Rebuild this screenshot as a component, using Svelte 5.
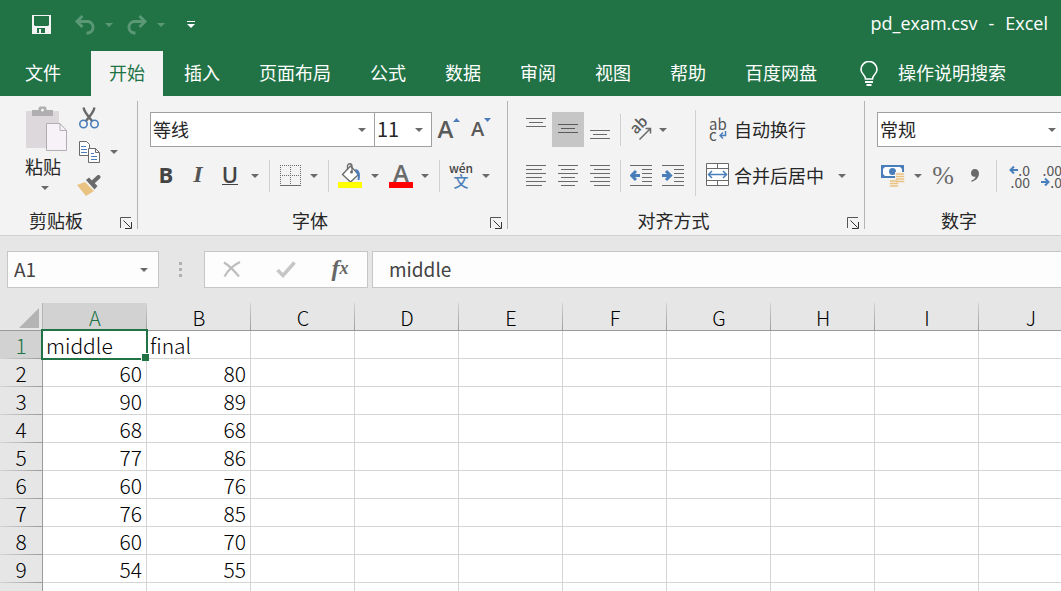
<script lang="ts">
	const tabs = ['文件', '开始', '插入', '页面布局', '公式', '数据', '审阅', '视图', '帮助', '百度网盘'];
	const columns = 'ABCDEFGHIJKLMNOPQRST'.split('');
	const data: (string | number)[][] = [
		['middle', 'final'],
		[60, 80],
		[90, 89],
		[68, 68],
		[77, 86],
		[60, 76],
		[76, 85],
		[60, 70],
		[54, 55]
	];
	const rowCount = 30;

	let activeTab = $state('开始');
	let selected = $state({ row: 0, col: 0 });
	let valign = $state('middle');

	let address = $derived(columns[selected.col] + (selected.row + 1));
	let content = $derived(cellValue(selected.row, selected.col));

	function cellValue(row: number, col: number) {
		return data[row]?.[col] ?? '';
	}
</script>

{#snippet caret()}
	<svg class="caret" width="8" height="4" viewBox="0 0 8 4"><path d="M0 0h8L4 4z" fill="currentColor" /></svg>
{/snippet}

{#snippet drop(label: string)}
	<button class="drop" aria-label={label}>{@render caret()}</button>
{/snippet}

{#snippet footer(name: string)}
	<div class="group-footer">
		<span class="group-name">{name}</span>
		<button class="launcher" aria-label="{name}设置">
			<svg width="12" height="12" viewBox="0 0 12 12" fill="none" stroke="#555">
				<path d="M.5 11V.5H11" />
				<path d="M3.5 3.5l7 7M11.5 5v6.5H5" stroke="#333" />
			</svg>
		</button>
	</div>
{/snippet}

<div class="excel">
	<header class="title-bar">
		<div class="quick">
			<button class="tool" aria-label="保存">
				<svg width="19" height="19" viewBox="0 0 19 19">
					<path d="M0 0h19v19H0zM2 1v9l1 1h13l1-1V1zM5 13v5h2v-4h2v4h4v-5z" fill="#f3f3f3" fill-rule="evenodd" />
				</svg>
			</button>
			<button class="tool undo" aria-label="撤消">
				<svg width="22" height="20" viewBox="0 0 22 20" fill="none" stroke="currentColor" stroke-width="3">
					<path d="M3 6.500h11a5.800 5.800 0 0 1 0 11.500h-1.500" />
					<path d="M8.500 1L3 6.500 8.500 12" />
				</svg>
			</button>
			<button class="drop faded" aria-label="撤消列表">{@render caret()}</button>
			<button class="tool redo" aria-label="恢复">
				<svg width="22" height="20" viewBox="0 0 22 20" fill="none" stroke="currentColor" stroke-width="3">
					<path d="M19 6.500H8A5.800 5.800 0 0 0 8 18h1.500" />
					<path d="M13.500 1L19 6.500 13.500 12" />
				</svg>
			</button>
			<button class="drop faded" aria-label="恢复列表">{@render caret()}</button>
			<button class="drop customize" aria-label="自定义快速访问工具栏">
				<svg width="8" height="7" viewBox="0 0 8 7" fill="#fff"><path d="M0 0h8v1H0zM0 3h8L4 7z" /></svg>
			</button>
		</div>
		<div class="doc-title"><span>pd_exam.csv</span><span>-</span><span>Excel</span></div>
	</header>

	<nav class="tabs">
		{#each tabs as tab}
			<button class="tab" class:active={tab === activeTab} onclick={() => (activeTab = tab)}>{tab}</button>
		{/each}
		<button class="tell-me">
			<svg width="18" height="26" viewBox="0 0 18 26" fill="none" stroke="#fff" stroke-width="1.600">
				<path d="M5.500 18c0-4-4.500-5-4.500-9.500a8 8 0 0 1 16 0c0 4.500-4.500 5.500-4.500 9.500z" />
				<path d="M5 21h8M6.500 24h5" stroke-width="2" />
			</svg>
			<span>操作说明搜索</span>
		</button>
	</nav>

	<section class="ribbon">
		<div class="group">
			<div class="clipboard">
				<button class="paste">
					<svg width="50" height="48" viewBox="0 0 50 48">
						<rect x="8" y="5" width="33" height="37" rx="1" fill="#dcd8dc" />
						<path d="M14 4h6.500V2.500a2 2 0 0 1 2-2h4a2 2 0 0 1 2 2V4H35v6H14z" fill="#b0aeb0" />
						<circle cx="24.500" cy="4" r="1.500" fill="#f3f3f3" />
						<path d="M28.500 17.500H42l6.500 7v20h-20z" fill="#f7f2f8" stroke="#b0aeb0" />
						<path d="M42 17.500v7h6.500" fill="none" stroke="#b0aeb0" />
					</svg>
					<span>粘贴</span>
					{@render caret()}
				</button>
				<div class="clip-tools">
					<button class="tool" aria-label="剪切">
						<svg width="20" height="22" viewBox="0 0 20 22" fill="none">
							<path d="M4.500 0.500c.5 3 2 6 9 14M15.500 0.500c-.5 3-2 6-9 14" stroke="#6a6a6a" stroke-width="2.400" />
							<circle cx="4.500" cy="17" r="3.700" stroke="#4a7ebb" stroke-width="1.600" />
							<circle cx="15.500" cy="17" r="3.700" stroke="#4a7ebb" stroke-width="1.600" />
						</svg>
					</button>
					<div class="row">
						<button class="tool" aria-label="复制">
							<svg width="21" height="22" viewBox="0 0 21 22" fill="#fff" stroke="#6a6a6a">
								<path d="M.5.5h7l3 3v11H.5z" />
								<path d="M2 5.500h5M2 8.500h6M2 11.500h6" stroke="#4a7ebb" />
								<path d="M9.500 7.500h7l4 4v10h-11zM16.500 7.500v4h4" />
								<path d="M12 12.500h3M12 15.500h6M12 18.500h6" stroke="#4a7ebb" />
							</svg>
						</button>
						<button class="drop copy-drop" aria-label="复制选项">{@render caret()}</button>
					</div>
					<button class="tool" aria-label="格式刷">
						<svg width="24" height="22" viewBox="0 0 24 22">
							<path d="M0 10l8-3 9 9-8 5z" fill="#eac282" />
							<path d="M9 5l3-2.500 8.500 8.500-3 3.500z" fill="#6a6a6a" />
							<path d="M15 8l6.500-6" stroke="#6a6a6a" stroke-width="4" stroke-linecap="round" />
						</svg>
					</button>
				</div>
			</div>
			{@render footer('剪贴板')}
		</div>

		<div class="group">
			<div class="group-body font-body">
				<div class="row">
					<div class="combo font-name">
						<select aria-label="字体"><option>等线</option><option>宋体</option></select>
						{@render caret()}
					</div>
					<div class="combo font-size">
						<select aria-label="字号"><option>11</option><option>12</option></select>
						{@render caret()}
					</div>
					<button class="tool grow" aria-label="增大字号">
						<span>A</span>
						<svg width="7" height="4" viewBox="0 0 7 4"><path d="M0 4h7L3.500 0z" fill="#4a7ebb" /></svg>
					</button>
					<button class="tool shrink" aria-label="减小字号">
						<span>A</span>
						<svg width="7" height="4" viewBox="0 0 7 4"><path d="M0 0h7L3.500 4z" fill="#4a7ebb" /></svg>
					</button>
				</div>
				<div class="row">
					<button class="tool bold">B</button>
					<button class="tool italic">I</button>
					<button class="tool underline"><span>U</span></button>
					{@render drop('下划线')}
					<i class="sep"></i>
					<button class="tool narrow" aria-label="边框">
						<svg width="21" height="22" viewBox="0 0 21 22" fill="none" stroke="#6a6a6a">
							<path d="M0 .5h21M0 10.500h21M.5 0v20M10.500 0v20M20.500 0v20" stroke-dasharray="1 1" />
							<path d="M0 20.500h21" />
						</svg>
					</button>
					{@render drop('边框选项')}
					<i class="sep"></i>
					<button class="tool" aria-label="填充颜色">
						<svg width="24" height="25" viewBox="0 0 24 25">
							<path d="M4.500 11.500l8-8.500 8 8.500-8 7.500z" fill="#fff" stroke="#6a6a6a" stroke-width="1.300" />
							<path d="M9.500 7V3a2.200 2.200 0 0 1 4.500 0v6" fill="none" stroke="#6a6a6a" stroke-width="1.300" />
							<circle cx="13.500" cy="9" r="1.500" fill="#6a6a6a" />
							<path d="M17 6c4 0 6 4 4.500 11h-2c.5-3 .5-5-.5-6z" fill="#4a7ebb" />
							<path d="M0 19h24v6H0z" fill="#ff0" />
						</svg>
					</button>
					{@render drop('填充颜色选项')}
					<button class="tool font-color" aria-label="字体颜色"><span>A</span></button>
					{@render drop('字体颜色选项')}
					<i class="sep"></i>
					<button class="tool pinyin"><span>wén</span><b>文</b></button>
					{@render drop('拼音选项')}
				</div>
			</div>
			{@render footer('字体')}
		</div>

		<div class="group">
			<div class="align-body">
				<div class="group-body align-left">
					<div class="row">
						<button class="tool" class:pressed={valign === 'top'} aria-label="顶端对齐" onclick={() => (valign = 'top')}>
							<svg width="20" height="34" viewBox="0 0 20 34" stroke="#6a6a6a"><path d="M0 5.500h20M3 9.500h14M0 13.500h20" /></svg>
						</button>
						<button class="tool" class:pressed={valign === 'middle'} aria-label="垂直居中" onclick={() => (valign = 'middle')}>
							<svg width="20" height="34" viewBox="0 0 20 34" stroke="#5a5a5a"><path d="M0 11.500h20M3 15.500h14M0 19.500h20" /></svg>
						</button>
						<button class="tool" class:pressed={valign === 'bottom'} aria-label="底端对齐" onclick={() => (valign = 'bottom')}>
							<svg width="20" height="34" viewBox="0 0 20 34" stroke="#6a6a6a"><path d="M0 17.500h20M3 21.500h14M0 25.500h20" /></svg>
						</button>
						<i class="sep"></i>
						<button class="tool" aria-label="方向">
							<svg class="orientation" width="22" height="22" viewBox="0 0 22 22" fill="none" stroke="#6a6a6a">
								<text class="slanted" transform="translate(6 16) rotate(-45)" fill="#5a5a5a" stroke="none">ab</text>
								<path d="M9.500 20.500L20 10M15.500 9.500h5v5" stroke-width="1.500" />
							</svg>
						</button>
						<button class="drop tight" aria-label="方向选项">{@render caret()}</button>
					</div>
					<div class="row">
						<button class="tool" aria-label="左对齐">
							<svg width="20" height="22" viewBox="0 0 20 22" stroke="#6a6a6a"><path d="M0 .5h20M0 4.500h16M0 8.500h20M0 12.500h16M0 16.500h20M0 20.500h16" /></svg>
						</button>
						<button class="tool" aria-label="居中">
							<svg width="20" height="22" viewBox="0 0 20 22" stroke="#6a6a6a"><path d="M0 .5h20M3 4.500h14M0 8.500h20M3 12.500h14M0 16.500h20M3 20.500h14" /></svg>
						</button>
						<button class="tool" aria-label="右对齐">
							<svg width="20" height="22" viewBox="0 0 20 22" stroke="#6a6a6a"><path d="M0 .5h20M4 4.500h16M0 8.500h20M4 12.500h16M0 16.500h20M4 20.500h16" /></svg>
						</button>
						<i class="sep"></i>
						<button class="tool" aria-label="减少缩进量">
							<svg width="22" height="22" viewBox="0 0 22 22" fill="none" stroke="#6a6a6a">
								<path d="M0 .5h22M12 4.500h10M12 8.500h10M12 12.500h10M12 16.500h10M0 20.500h22" />
								<path d="M10 10.500H2M6 6l-4.500 4.500L6 15" stroke="#4a7ebb" stroke-width="3" />
							</svg>
						</button>
						<button class="tool" aria-label="增加缩进量">
							<svg width="22" height="22" viewBox="0 0 22 22" fill="none" stroke="#6a6a6a">
								<path d="M0 .5h22M12 4.500h10M12 8.500h10M12 12.500h10M12 16.500h10M0 20.500h22" />
								<path d="M0 10.500h8M4 6l4.500 4.500L4 15" stroke="#4a7ebb" stroke-width="3" />
							</svg>
						</button>
					</div>
				</div>
				<i class="tall-sep"></i>
				<div class="group-body">
					<div class="row">
						<button class="wide">
							<span class="wrap-icon">
								<span>ab</span>
								<span>c<svg width="8" height="8" viewBox="0 0 8 8" fill="none" stroke="#4a7ebb" stroke-width="1.500"><path d="M6.500 0v4.500H1M4 1.500l-3 3 3 3" /></svg></span>
							</span>
							自动换行
						</button>
					</div>
					<div class="row">
						<button class="wide">
							<svg width="24" height="24" viewBox="0 0 24 24" fill="#fff" stroke="#6a6a6a">
								<path d="M.5 .5h22v22H.5zM.5 5.500h22M.5 17.500h22M11.500 .5v5M11.500 17.500v5" />
								<path d="M3 11.500h17M6 8l-3.500 3.500L6 15M17 8l3.500 3.500L17 15" fill="none" stroke="#4a7ebb" stroke-width="1.500" />
							</svg>
							合并后居中
						</button>
						<button class="drop merge-drop" aria-label="合并选项">{@render caret()}</button>
					</div>
				</div>
			</div>
			{@render footer('对齐方式')}
		</div>

		<div class="group">
			<div class="group-body">
				<div class="row">
					<div class="combo number-format">
						<select aria-label="数字格式"><option>常规</option><option>数值</option></select>
						{@render caret()}
					</div>
				</div>
				<div class="row">
					<button class="tool" aria-label="会计数字格式">
						<svg width="24" height="24" viewBox="0 0 24 24">
							<path d="M0 1h23v13H0z" fill="#4a7ebb" />
							<path d="M4 3h15l2 2v5l-2 2H4l-2-2V5z" fill="#fff" />
							<circle cx="11.500" cy="7.500" r="3.500" fill="#4a7ebb" />
							<path d="M14 8h10v11h-6v5H7v-9h7z" fill="#f3f3f3" />
							<path d="M15.500 10h7M15.500 12.500h7M15.500 15h7M15.500 17.500h7M9.500 17h7M9.500 19.500h7M9.500 22h7" stroke="#eac282" stroke-width="1.700" stroke-linecap="round" />
						</svg>
					</button>
					{@render drop('会计数字格式选项')}
					<button class="tool percent">%</button>
					<button class="tool" aria-label="千位分隔样式">
						<svg width="10" height="16" viewBox="0 0 10 16"><path d="M4.500 1C7.500 1 9 3 9 5.500 9 9.500 6 12.500 1.500 14v-1.500C4 11.500 5.500 10 5.500 8.500 3 9.500 1 7.500 1 5c0-2.300 1.500-4 3.500-4z" fill="#6a6a6a" /></svg>
					</button>
					<i class="sep"></i>
					<button class="tool decimals" aria-label="增加小数位数">
						<span><svg width="9" height="8" viewBox="0 0 9 8" fill="none" stroke="#4a7ebb" stroke-width="2"><path d="M9 4H2M5 .5L1.500 4 5 7.500" /></svg>.0</span>
						<span>.00</span>
					</button>
					<button class="tool decimals" aria-label="减少小数位数">
						<span>.00</span>
						<span><svg width="9" height="8" viewBox="0 0 9 8" fill="none" stroke="#4a7ebb" stroke-width="2"><path d="M0 4h7M4 .5L7.500 4 4 7.500" /></svg>.0</span>
					</button>
				</div>
			</div>
			{@render footer('数字')}
		</div>
	</section>

	<section class="formula-bar">
		<div class="combo name-box">
			<input aria-label="名称框" value={address} />
			{@render caret()}
		</div>
		<svg class="dots" width="3" height="16" viewBox="0 0 3 16" fill="#b0b0b0"><path d="M0 0h3v3H0zM0 6h3v3H0zM0 12h3v3H0z" /></svg>
		<div class="formula-tools">
			<button aria-label="取消">
				<svg width="18" height="17" viewBox="0 0 18 17" fill="none" stroke="#bdbdbd" stroke-width="2.200"><path d="M1 1.500c5 3 10 8 15 14M17 1C11 4 5 9 1.500 15.500" /></svg>
			</button>
			<button aria-label="输入">
				<svg width="20" height="17" viewBox="0 0 20 17" fill="none" stroke="#c6c6c6" stroke-width="3.500"><path d="M1.500 9l5.500 5.500L18.500 1.500" /></svg>
			</button>
			<button class="fx" aria-label="插入函数">f<small>x</small></button>
		</div>
		<input class="formula" aria-label="编辑栏" value={content} />
	</section>

	<main class="sheet">
		<table>
			<thead>
				<tr>
					<th class="corner"><svg width="20" height="20" viewBox="0 0 20 20"><path d="M20 0v20H0z" fill="#b4b4b4" /></svg></th>
					{#each columns as name, c}
						<th class="col-head" class:current={c === selected.col}>{name}</th>
					{/each}
				</tr>
			</thead>
			<tbody>
				{#each Array(rowCount) as _, r}
					<tr>
						<th class="row-head" class:current={r === selected.row}>{r + 1}</th>
						{#each columns as _, c}
							<td class:number={typeof cellValue(r, c) === 'number'} onclick={() => (selected = { row: r, col: c })}>
								{cellValue(r, c)}
								{#if r === selected.row && c === selected.col}
									<span class="selection"></span>
								{/if}
							</td>
						{/each}
					</tr>
				{/each}
			</tbody>
		</table>
	</main>
</div>

<style>
	:global(body) {
		margin: 0;
	}

	.excel {
		display: flex;
		flex-direction: column;
		height: 100vh;
		overflow: hidden;
		background: #e6e6e6;
		color: #262626;
		font-family: 'Noto Sans CJK SC', sans-serif;
		font-size: 18px;
	}

	.excel * {
		box-sizing: border-box;
	}

	svg {
		display: block;
		flex: none;
	}

	button {
		display: flex;
		align-items: center;
		justify-content: center;
		flex: none;
		padding: 0;
		border: none;
		background: none;
		color: inherit;
		font: inherit;
		white-space: nowrap;
	}

	.caret {
		color: #6a6a6a;
	}

	/* Title bar and tabs */
	.title-bar {
		display: flex;
		align-items: center;
		justify-content: space-between;
		flex: none;
		height: 51px;
		padding: 0 13px 2px 25px;
		background: #217346;
		color: #fff;
	}

	.quick {
		display: flex;
		align-items: center;
	}

	.quick .drop {
		width: 16px;
	}

	.undo,
	.redo,
	.faded .caret {
		color: #5a9876;
	}

	.undo {
		margin-left: 12px;
	}

	.redo {
		margin-left: 4px;
	}

	.quick .customize {
		margin-left: 14px;
	}

	.doc-title {
		display: flex;
		gap: 11px;
		padding-bottom: 3px;
		font-family: 'Open Sans', sans-serif;
		line-height: 24px;
	}

	.tabs {
		display: flex;
		flex: none;
		gap: 3px;
		height: 45px;
		padding-left: 7px;
		background: #217346;
		color: #fff;
	}

	.tab {
		padding: 0 18px 4px;
	}

	.tab:first-child {
		margin-right: 9px;
	}

	.tab.active {
		background: #f3f3f3;
		color: #217346;
	}

	.tell-me {
		gap: 20px;
		margin-left: 22px;
	}

	.tell-me span {
		padding-bottom: 4px;
	}

	/* Ribbon */
	.ribbon {
		display: flex;
		flex: none;
		padding: 5px 0 6px;
		border-bottom: 1px solid #d2d2d2;
		background: #f3f3f3;
	}

	.group {
		display: flex;
		flex-direction: column;
		justify-content: space-between;
		flex: none;
		height: 128px;
		border-right: 1px solid #b4b4b4;
	}

	.group-body {
		display: flex;
		flex-direction: column;
		gap: 11px;
		padding: 11px 12px 0;
	}

	.font-body {
		padding-right: 11px;
	}

	.row {
		display: flex;
		align-items: center;
		height: 35px;
	}

	.group-footer {
		display: flex;
		align-items: flex-end;
		height: 16px;
		padding-right: 5px;
		line-height: 16px;
	}

	.group-name {
		flex: 1;
		padding-bottom: 1px;
		text-align: center;
	}

	.launcher {
		margin-left: 8px;
	}

	.tool {
		width: 32px;
		height: 35px;
	}

	.tool.narrow {
		width: 30px;
	}

	.pressed {
		background: #c6c6c6;
	}

	.drop {
		width: 18px;
		height: 35px;
	}

	.drop.tight {
		width: 12px;
	}

	.sep {
		width: 1px;
		height: 32px;
		margin: 0 5px;
		background: #d0d0d0;
	}

	.clipboard {
		display: flex;
		gap: 5px;
		padding: 0 8px 0 18px;
	}

	.paste {
		flex-direction: column;
		justify-content: flex-start;
		width: 50px;
		padding-top: 5px;
		line-height: 24px;
	}

	.paste .caret {
		margin: 8px 0 0 4px;
	}

	.clip-tools .tool,
	.clip-tools .row {
		height: 34px;
	}

	.clip-tools .row {
		width: 56px;
	}

	.combo {
		display: grid;
		align-items: center;
		height: 35px;
		border: 1px solid #a0a0a0;
		background: #fff;
	}

	.combo > :global(*) {
		grid-area: 1 / 1;
	}

	.combo .caret {
		justify-self: end;
		margin-right: 8px;
		pointer-events: none;
	}

	.combo select,
	.combo input {
		appearance: none;
		width: 100%;
		min-width: 0;
		height: 33px;
		padding: 0 2px 2px;
		border: none;
		outline: none;
		background: none;
		color: #262626;
		font: inherit;
	}

	.font-name {
		width: 225px;
	}

	.font-size {
		width: 58px;
		margin-left: -1px;
	}

	.combo.font-size select {
		font-size: 20px;
	}

	.number-format {
		width: 188px;
	}

	.grow,
	.shrink {
		align-items: flex-start;
		padding-left: 2px;
		color: #5a5a5a;
		font-family: 'Open Sans', sans-serif;
		font-weight: 600;
		line-height: 34px;
	}

	.grow {
		font-size: 24px;
	}

	.shrink {
		font-size: 20px;
	}

	.grow svg,
	.shrink svg {
		margin-top: 6px;
	}

	.bold,
	.underline {
		padding-bottom: 3px;
		color: #444;
		font-family: 'Open Sans', sans-serif;
		font-size: 22px;
		font-weight: 700;
	}

	.underline {
		font-weight: 600;
	}

	.underline span {
		border-bottom: 1px solid #444;
		line-height: 20px;
	}

	.italic {
		padding-bottom: 2px;
		color: #555;
		font-family: 'Liberation Serif', serif;
		font-size: 24px;
		font-style: italic;
		font-weight: 700;
	}

	.font-color {
		padding-left: 2px;
	}

	.font-color span {
		width: 24px;
		height: 25px;
		border-bottom: 6px solid #f00;
		color: #6a6a6a;
		font-family: 'Open Sans', sans-serif;
		font-size: 24px;
		font-weight: 600;
		line-height: 20px;
	}

	.pinyin {
		flex-direction: column;
		color: #444;
		font-size: 12px;
		font-weight: 500;
		line-height: 11px;
	}

	.pinyin b {
		color: #4a7ebb;
		font-size: 15px;
		font-weight: 500;
		line-height: 16px;
	}

	.align-body {
		display: flex;
	}

	.align-body .group-body {
		padding-right: 0;
	}

	.align-left .sep {
		margin: 0 4px;
	}

	.align-left {
		width: 187px;
	}

	.tall-sep {
		width: 1px;
		height: 86px;
		margin-top: 9px;
		background: #d0d0d0;
	}

	.orientation {
		overflow: visible;
	}

	.slanted {
		font-size: 15px;
		font-weight: 500;
	}

	.align-body .tall-sep + .group-body {
		padding: 11px 13px 0 10px;
	}

	.wide {
		gap: 4px;
		padding-bottom: 1px;
	}

	.wrap-icon {
		display: flex;
		flex-direction: column;
		width: 24px;
		padding-left: 3px;
		color: #555;
		font-size: 15px;
		line-height: 11px;
		text-align: left;
	}

	.wrap-icon span {
		display: flex;
		align-items: center;
		gap: 2px;
	}

	.merge-drop {
		margin-left: 9px;
	}

	.percent {
		color: #6a6a6a;
		font-family: 'Liberation Serif', serif;
		font-size: 26px;
	}

	.decimals {
		flex-direction: column;
		align-items: center;
		color: #555;
		font-size: 14px;
		line-height: 12px;
	}

	.decimals span {
		display: flex;
		align-items: center;
		justify-content: flex-end;
		width: 24px;
	}

	/* Formula bar */
	.formula-bar {
		display: flex;
		align-items: center;
		flex: none;
		height: 67px;
		padding: 0 0 0 7px;
	}

	.name-box,
	.formula-tools,
	.formula {
		height: 37px;
		border: 1px solid #c6c6c6;
		background: #fdfdfd;
	}

	.name-box {
		width: 152px;
	}

	.combo.name-box input {
		padding-left: 6px;
		color: #444;
		font-size: 19px;
	}

	.name-box .caret {
		margin-right: 10px;
	}

	.dots {
		margin: 0 22px 0 20px;
	}

	.formula-tools {
		display: flex;
		flex: none;
		width: 164px;
	}

	.formula-tools button {
		flex: 1;
	}

	.formula-tools .fx {
		padding-bottom: 3px;
		color: #666;
		font-family: 'Liberation Serif', serif;
		font-size: 24px;
		font-style: italic;
		font-weight: 700;
	}

	.fx small {
		font-size: 18px;
	}

	.formula {
		flex: 1;
		min-width: 0;
		margin-left: 4px;
		padding: 0 16px 3px;
		border-right: none;
		outline: none;
		color: #444;
		font-family: inherit;
		font-size: 19px;
	}

	/* Sheet */
	.sheet {
		flex: 1;
		min-height: 0;
		overflow: hidden;
	}

	table {
		width: max-content;
		border-spacing: 0;
		table-layout: fixed;
		color: #000;
		font-size: 21px;
		font-weight: 300;
		line-height: 25px;
	}

	th,
	td {
		height: 28px;
		padding: 0;
		font-weight: inherit;
	}

	td {
		position: relative;
		width: 104px;
		min-width: 104px;
		padding: 2px 4px 0 3px;
		border-right: 1px solid #d4d4d4;
		border-bottom: 1px solid #d4d4d4;
		background: #fff;
	}

	td.number {
		text-align: right;
	}

	.corner,
	.row-head {
		width: 43px;
		min-width: 43px;
		border-right: 1px solid #9b9b9b;
		background: #e6e6e6;
	}

	.corner {
		border-bottom: 1px solid #9b9b9b;
		border-right-color: #b4b4b4;
	}

	.corner svg {
		margin: 3px 0 0 19px;
	}

	.col-head {
		padding-top: 2px;
		border-bottom: 1px solid #9b9b9b;
		background: linear-gradient(#d4d4d4, #9b9b9b) right / 1px 100% no-repeat #e6e6e6;
		font-size: 20px;
	}

	.row-head {
		padding-top: 1px;
		background: linear-gradient(to right, #d4d4d4, #9b9b9b) bottom / 100% 1px no-repeat #e6e6e6;
	}

	.col-head.current,
	.row-head.current {
		background-color: #d2d2d2;
		color: #217346;
	}

	.selection {
		position: absolute;
		inset: -2px;
		z-index: 1;
		border: 2px solid #217346;
	}

	.selection::after {
		content: '';
		position: absolute;
		right: -3px;
		bottom: -3px;
		width: 7px;
		height: 7px;
		border: 1px solid #fff;
		border-width: 1px 0 0 1px;
		background: #217346;
	}
</style>
